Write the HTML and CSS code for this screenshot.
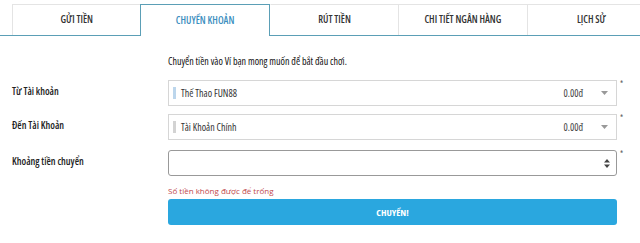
FILE: index.html
```html
<!DOCTYPE html>
<html lang="vi">
<head>
<meta charset="utf-8">
<link rel="stylesheet" href="styles.css">
</head>
<body>
<div class="page">
  <nav class="tabs">
    <div class="tab">GỬI TIỀN</div>
    <div class="tab active">CHUYỂN KHOẢN</div>
    <div class="tab">RÚT TIỀN</div>
    <div class="tab">CHI TIẾT NGÂN HÀNG</div>
    <div class="tab">LỊCH SỬ</div>
  </nav>
  <div class="content">
    <p class="intro">Chuyển tiền vào Ví bạn mong muốn để bắt đầu chơi.</p>
    <div class="row row-from">
      <div class="label">Từ Tài khoản</div>
      <div class="field">
        <div class="select">
          <span class="mark mark-blue"></span>
          <span class="sel-text">Thế Thao FUN88</span>
          <span class="amount">0.00đ</span>
          <svg class="caret" width="7" height="4" viewBox="0 0 7 4"><path d="M0 0H7L3.5 4Z" fill="#999"/></svg>
        </div>
        <span class="req">*</span>
      </div>
    </div>
    <div class="row row-to">
      <div class="label">Đến Tài Khoản</div>
      <div class="field">
        <div class="select">
          <span class="mark mark-gray"></span>
          <span class="sel-text">Tài Khoản Chính</span>
          <span class="amount">0.00đ</span>
          <svg class="caret" width="7" height="4" viewBox="0 0 7 4"><path d="M0 0H7L3.5 4Z" fill="#999"/></svg>
        </div>
        <span class="req">*</span>
      </div>
    </div>
    <div class="row row-amt">
      <div class="label">Khoảng tiền chuyển</div>
      <div class="field">
        <div class="input">
          <svg class="spin" width="6" height="9" viewBox="0 0 6 9"><path d="M0 3.5H6L3 0Z M0 5.5H6L3 9Z" fill="#444"/></svg>
        </div>
        <span class="req">*</span>
      </div>
    </div>
    <div class="row row-err">
      <div class="label"></div>
      <div class="field-col">
        <div class="error">Số tiền không được để trống</div>
        <button class="btn">CHUYỂN!</button>
      </div>
    </div>
  </div>
</div>
</body>
</html>
```

FILE: styles.css
```css
html, body {
  margin: 0;
  padding: 0;
  background: #fff;
  overflow: hidden;
}
body {
  font-family: "Open Sans", Lato, sans-serif;
  font-stretch: 80%;
  color: #222;
  width: 640px;
  height: 243px;
}
.page {
  padding-top: 4px;
}
.tabs {
  display: flex;
  margin-left: 12px;
  width: 643px;
  height: 31px;
  position: relative;
}
.tabs::after {
  content: "";
  position: absolute;
  left: -12px;
  right: 0;
  bottom: -1px;
  height: 1px;
  background: #5b9fb6;
}
.tab {
  flex: 1;
  display: flex;
  align-items: center;
  justify-content: center;
  font-size: 10px;
  font-weight: 600;
  color: #333;
  border-top: 1px solid #e4e4e4;
  border-left: 1px solid #e4e4e4;
  box-sizing: border-box;
  padding-bottom: 2px;
}
.tab.active {
  color: #3d8fc0;
  border: 1px solid #5b9fb6;
  border-bottom: none;
  background: #fff;
  position: relative;
  z-index: 1;
  height: 32px;
}
.tab.active + .tab {
  border-left-color: transparent;
}
.content {
  padding: 0 0 0 12px;
}
.intro {
  margin: 20px 0 0 156px;
  font-size: 10px;
  font-weight: 400;
  color: #111;
  line-height: 12px;
  height: 12px;
}
.row {
  display: flex;
  align-items: center;
}
.row-from { margin-top: 13px; }
.row-to { margin-top: 8px; }
.row-amt { margin-top: 10px; }
.label {
  width: 156px;
  font-stretch: 80%;
  font-size: 10px;
  font-weight: 600;
  color: #222;
  padding-bottom: 4px;
}
.field {
  display: flex;
  align-items: flex-start;
}
.select {
  width: 449px;
  height: 26px;
  box-sizing: border-box;
  border: 1px solid #d6d6d6;
  display: flex;
  align-items: center;
  padding: 0 8px 0 4px;
  font-size: 10px;
  font-stretch: 87.5%;
  color: #333;
}
.mark {
  width: 3px;
  height: 12px;
  margin-right: 5px;
}
.mark-blue { background: #bcd6ec; }
.mark-gray { background: #d3d3d3; }
.sel-text { flex: 1; }
.amount { margin-right: 18px; color: #444; }
.caret { display: block; }
.req {
  font-size: 8px;
  color: #555;
  margin-left: 3px;
  line-height: 8px;
}
.input {
  width: 449px;
  height: 26px;
  box-sizing: border-box;
  border: 1px solid #999;
  border-radius: 3px;
  display: flex;
  align-items: center;
  justify-content: flex-end;
  padding-right: 6px;
}
.spin { display: block; }
.row-err { margin-top: 10px; align-items: flex-start; }
.field-col {
  display: flex;
  flex-direction: column;
}
.error {
  font-size: 8px;
  font-stretch: 100%;
  color: #c0474b;
  line-height: 10px;
  height: 10px;
}
.btn {
  margin-top: 3px;
  width: 449px;
  height: 26px;
  border: none;
  border-radius: 3px;
  background: #2aa7df;
  color: #fff;
  font-family: "Open Sans", Lato, sans-serif;
  font-stretch: 80%;
  font-weight: 700;
  font-size: 9.5px;
  padding: 0;
}
```
